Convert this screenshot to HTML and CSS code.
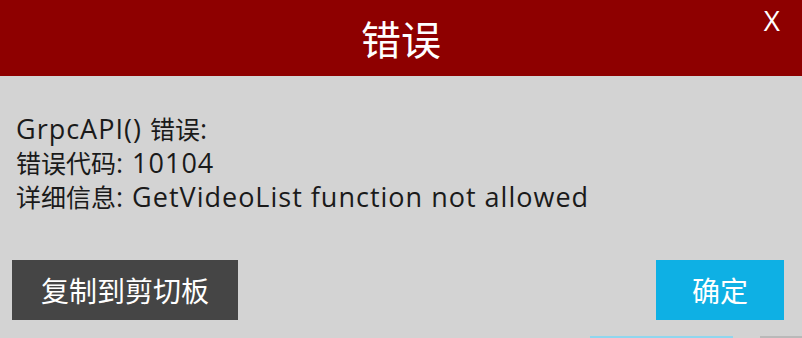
FILE: index.html
```html
<!DOCTYPE html>
<html lang="zh-CN">
<head>
<meta charset="utf-8">
<title>错误</title>
<link rel="stylesheet" href="styles.css">
</head>
<body>
<div class="dialog">
  <header class="header">
    <h1 class="title">错误</h1>
    <span class="close">X</span>
  </header>
  <div class="message">
    <div class="line">GrpcAPI() <span class="cjk">错误</span>:</div>
    <div class="line"><span class="cjk">错误代码</span>: 10104</div>
    <div class="line"><span class="cjk">详细信息</span>: GetVideoList function not allowed</div>
  </div>
  <div class="actions">
    <button class="btn btn-copy">复制到剪切板</button>
    <button class="btn btn-ok">确定</button>
  </div>
  <div class="edge">
    <span class="edge-cyan"></span>
    <span class="edge-gray"></span>
  </div>
</div>
</body>
</html>
```
FILE: styles.css
```css
html, body {
  margin: 0;
  padding: 0;
}
body {
  width: 802px;
  height: 338px;
  overflow: hidden;
  background: #d3d3d3;
  font-family: "Open Sans", "Noto Sans CJK SC", sans-serif;
}
.dialog {
  height: 338px;
  display: flex;
  flex-direction: column;
  background: #d3d3d3;
}
.header {
  position: relative;
  height: 76px;
  background: #8e0000;
  display: flex;
  align-items: center;
  justify-content: center;
}
.title {
  margin: 0;
  color: #ffffff;
  font-family: "Noto Sans CJK SC", sans-serif;
  font-weight: 400;
  font-size: 40px;
  line-height: 76px;
}
.close {
  position: absolute;
  top: 3px;
  right: 22px;
  color: #ffffff;
  font-family: "Open Sans", sans-serif;
  font-size: 28px;
  line-height: 34px;
}
.message {
  padding: 35px 0 0 16px;
  color: #1a1a1a;
  font-size: 27px;
  letter-spacing: 1px;
}
.line {
  height: 34px;
  line-height: 34px;
  white-space: nowrap;
}
.cjk {
  font-family: "Noto Sans CJK SC", sans-serif;
  font-size: 25px;
  letter-spacing: 0;
}
.actions {
  margin-top: 47px;
  display: flex;
  justify-content: space-between;
  padding: 0 18px 0 12px;
}
.btn {
  height: 60px;
  border: none;
  margin: 0;
  padding: 0;
  color: #ffffff;
  font-family: "Noto Sans CJK SC", sans-serif;
  font-size: 28px;
  line-height: 60px;
}
.btn-copy {
  width: 226px;
  background: #454545;
}
.btn-ok {
  width: 128px;
  background: #0eb0e4;
}
.edge {
  margin-top: auto;
  height: 2px;
  display: flex;
}
.edge-cyan {
  margin-left: 590px;
  width: 143px;
  background: #8fd6ee;
}
.edge-gray {
  margin-left: 27px;
  flex: 1;
  background: #b9b9b9;
}
```
